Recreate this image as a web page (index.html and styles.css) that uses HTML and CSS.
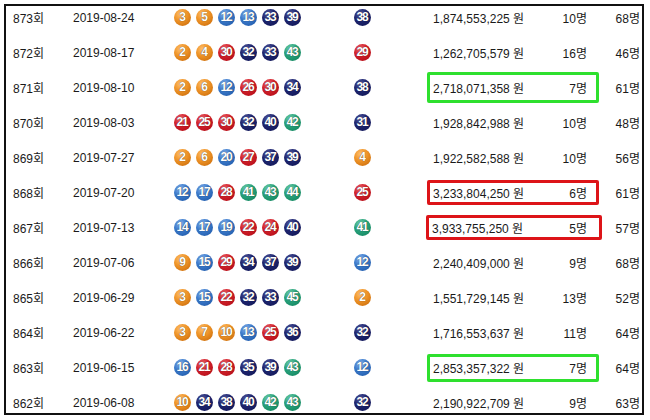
FILE: index.html
```html
<!DOCTYPE html>
<html lang="ko">
<head>
<meta charset="utf-8">
<title>로또 당첨번호</title>
<link rel="stylesheet" href="styles.css">
</head>
<body>
<div class="frame">
  <div class="list">
    <div class="row">
      <span class="round">873회</span><span class="date">2019-08-24</span>
      <span class="balls"><i class="ball b1">3</i><i class="ball b1">5</i><i class="ball b2">12</i><i class="ball b2">13</i><i class="ball b4">33</i><i class="ball b4">39</i></span>
      <i class="ball bonus b4">38</i>
      <span class="prize"><span class="amount">1,874,553,225 원</span><span class="winners">10명</span></span>
      <span class="last">68명</span>
    </div>
    <div class="row">
      <span class="round">872회</span><span class="date">2019-08-17</span>
      <span class="balls"><i class="ball b1">2</i><i class="ball b1">4</i><i class="ball b3">30</i><i class="ball b4">32</i><i class="ball b4">33</i><i class="ball b5">43</i></span>
      <i class="ball bonus b3">29</i>
      <span class="prize"><span class="amount">1,262,705,579 원</span><span class="winners">16명</span></span>
      <span class="last">46명</span>
    </div>
    <div class="row">
      <span class="round">871회</span><span class="date">2019-08-10</span>
      <span class="balls"><i class="ball b1">2</i><i class="ball b1">6</i><i class="ball b2">12</i><i class="ball b3">26</i><i class="ball b3">30</i><i class="ball b4">34</i></span>
      <i class="ball bonus b4">38</i>
      <span class="prize hl-green"><span class="amount">2,718,071,358 원</span><span class="winners">7명</span></span>
      <span class="last">61명</span>
    </div>
    <div class="row">
      <span class="round">870회</span><span class="date">2019-08-03</span>
      <span class="balls"><i class="ball b3">21</i><i class="ball b3">25</i><i class="ball b3">30</i><i class="ball b4">32</i><i class="ball b4">40</i><i class="ball b5">42</i></span>
      <i class="ball bonus b4">31</i>
      <span class="prize"><span class="amount">1,928,842,988 원</span><span class="winners">10명</span></span>
      <span class="last">48명</span>
    </div>
    <div class="row">
      <span class="round">869회</span><span class="date">2019-07-27</span>
      <span class="balls"><i class="ball b1">2</i><i class="ball b1">6</i><i class="ball b2">20</i><i class="ball b3">27</i><i class="ball b4">37</i><i class="ball b4">39</i></span>
      <i class="ball bonus b1">4</i>
      <span class="prize"><span class="amount">1,922,582,588 원</span><span class="winners">10명</span></span>
      <span class="last">56명</span>
    </div>
    <div class="row">
      <span class="round">868회</span><span class="date">2019-07-20</span>
      <span class="balls"><i class="ball b2">12</i><i class="ball b2">17</i><i class="ball b3">28</i><i class="ball b5">41</i><i class="ball b5">43</i><i class="ball b5">44</i></span>
      <i class="ball bonus b3">25</i>
      <span class="prize hl-red"><span class="amount">3,233,804,250 원</span><span class="winners">6명</span></span>
      <span class="last">61명</span>
    </div>
    <div class="row">
      <span class="round">867회</span><span class="date">2019-07-13</span>
      <span class="balls"><i class="ball b2">14</i><i class="ball b2">17</i><i class="ball b2">19</i><i class="ball b3">22</i><i class="ball b3">24</i><i class="ball b4">40</i></span>
      <i class="ball bonus b5">41</i>
      <span class="prize hl-red wide"><span class="amount">3,933,755,250 원</span><span class="winners">5명</span></span>
      <span class="last">57명</span>
    </div>
    <div class="row">
      <span class="round">866회</span><span class="date">2019-07-06</span>
      <span class="balls"><i class="ball b1">9</i><i class="ball b2">15</i><i class="ball b3">29</i><i class="ball b4">34</i><i class="ball b4">37</i><i class="ball b4">39</i></span>
      <i class="ball bonus b2">12</i>
      <span class="prize"><span class="amount">2,240,409,000 원</span><span class="winners">9명</span></span>
      <span class="last">68명</span>
    </div>
    <div class="row">
      <span class="round">865회</span><span class="date">2019-06-29</span>
      <span class="balls"><i class="ball b1">3</i><i class="ball b2">15</i><i class="ball b3">22</i><i class="ball b4">32</i><i class="ball b4">33</i><i class="ball b5">45</i></span>
      <i class="ball bonus b1">2</i>
      <span class="prize"><span class="amount">1,551,729,145 원</span><span class="winners">13명</span></span>
      <span class="last">52명</span>
    </div>
    <div class="row">
      <span class="round">864회</span><span class="date">2019-06-22</span>
      <span class="balls"><i class="ball b1">3</i><i class="ball b1">7</i><i class="ball b1">10</i><i class="ball b2">13</i><i class="ball b3">25</i><i class="ball b4">36</i></span>
      <i class="ball bonus b4">32</i>
      <span class="prize"><span class="amount">1,716,553,637 원</span><span class="winners">11명</span></span>
      <span class="last">64명</span>
    </div>
    <div class="row">
      <span class="round">863회</span><span class="date">2019-06-15</span>
      <span class="balls"><i class="ball b2">16</i><i class="ball b3">21</i><i class="ball b3">28</i><i class="ball b4">35</i><i class="ball b4">39</i><i class="ball b5">43</i></span>
      <i class="ball bonus b2">12</i>
      <span class="prize hl-green short"><span class="amount">2,853,357,322 원</span><span class="winners">7명</span></span>
      <span class="last">64명</span>
    </div>
    <div class="row">
      <span class="round">862회</span><span class="date">2019-06-08</span>
      <span class="balls"><i class="ball b1">10</i><i class="ball b4">34</i><i class="ball b4">38</i><i class="ball b4">40</i><i class="ball b5">42</i><i class="ball b5">43</i></span>
      <i class="ball bonus b4">32</i>
      <span class="prize"><span class="amount">2,190,922,709 원</span><span class="winners">9명</span></span>
      <span class="last">63명</span>
    </div>
  </div>
</div>
</body>
</html>
```

FILE: styles.css
```css
* { box-sizing: border-box; }

body {
  margin: 0;
  background: #fff;
  font: 12px "Liberation Sans", "Noto Sans CJK KR", sans-serif;
  color: #1a1a1a;
}

.frame {
  margin: 4px 0 0 4px;
  width: 640px;
  height: 411px;
  border: 2px solid #111;
  overflow: hidden;
}

.list {
  margin-top: -6px;
}

.row {
  display: flex;
  align-items: center;
  height: 35px;
}

.round {
  width: 67px;
  padding-left: 7px;
}

.date {
  width: 101px;
}

.balls {
  display: flex;
  gap: 5px;
}

.ball {
  display: block;
  width: 17px;
  height: 17px;
  border-radius: 50%;
  font-style: normal;
  font-weight: bold;
  font-size: 12px;
  line-height: 17px;
  letter-spacing: -1.2px;
  text-indent: -1.2px;
  text-align: center;
  color: #fff;
  text-shadow: 0 0 1px rgba(0, 0, 0, 0.8);
  flex: none;
}

.b1 { background: radial-gradient(circle at 38% 30%, #ffc070 0%, #f0962a 40%, #d27410 80%, #b86000 100%); }
.b2 { background: radial-gradient(circle at 38% 30%, #8fb8f0 0%, #3d7ccc 40%, #2560b0 80%, #1a4c96 100%); }
.b3 { background: radial-gradient(circle at 38% 30%, #f07078 0%, #d3222c 40%, #b8101a 80%, #980810 100%); }
.b4 { background: radial-gradient(circle at 38% 30%, #5a62a8 0%, #1f2670 40%, #141a5c 80%, #0c1048 100%); }
.b5 { background: radial-gradient(circle at 38% 30%, #7fd8b4 0%, #2aa37c 40%, #168a64 80%, #0c7050 100%); }

.bonus {
  margin-left: 53px;
}

.prize {
  margin-left: 56px;
  width: 172px;
  height: 30px;
  display: flex;
  align-items: center;
  justify-content: space-between;
  padding: 0 9px 0 3px;
  border: 3px solid transparent;
  border-radius: 2px;
}

.hl-green {
  border-color: #2ee02e;
  height: 31px;
}

.hl-red {
  border-color: #dd1418;
  height: 25px;
}

.hl-red.wide {
  margin-left: 55px;
  width: 176px;
  padding-right: 12px;
}

.hl-green.short {
  height: 28px;
}

.last {
  margin-left: auto;
  padding-right: 2px;
}
```
